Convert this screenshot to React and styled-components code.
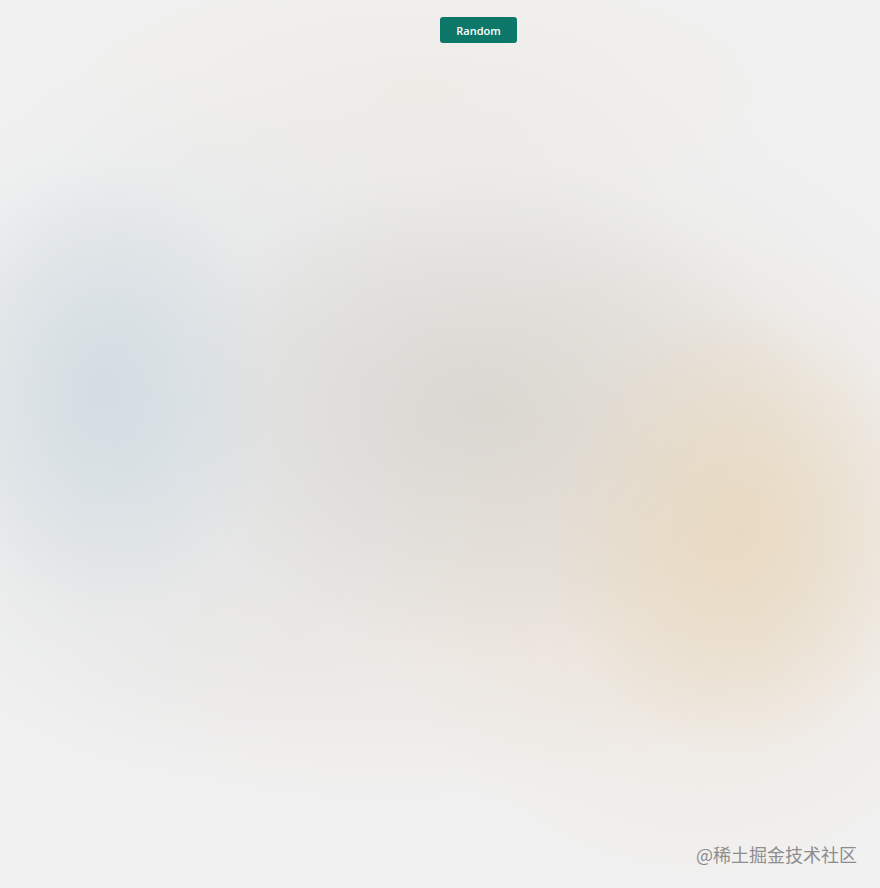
import React from "react";
import styled, { createGlobalStyle } from "styled-components";

const Global = createGlobalStyle`
  html, body { margin: 0; padding: 0; height: 100%; }
  body { background: #f1f1f1; font-family: "Segoe UI", "Open Sans", "Noto Sans", sans-serif; }
  #root { height: 100%; }
`;

const Stage = styled.div`
  position: relative;
  width: 880px;
  height: 888px;
  overflow: hidden;
  background:
    radial-gradient(ellipse 170px 230px at 105px 390px, rgba(205, 217, 224, 0.75), rgba(205, 217, 224, 0.35) 55%, rgba(205, 217, 224, 0) 100%),
    radial-gradient(ellipse 190px 230px at 740px 530px, rgba(232, 216, 190, 0.85), rgba(232, 216, 190, 0.4) 55%, rgba(232, 216, 190, 0) 100%),
    radial-gradient(ellipse 320px 250px at 490px 410px, rgba(216, 212, 206, 0.8), rgba(216, 212, 206, 0.35) 60%, rgba(216, 212, 206, 0) 100%),
    radial-gradient(ellipse 320px 330px at 700px 560px, rgba(236, 224, 208, 0.75), rgba(236, 224, 208, 0) 100%),
    radial-gradient(ellipse 360px 360px at 150px 420px, rgba(224, 229, 232, 0.8), rgba(224, 229, 232, 0) 100%),
    radial-gradient(ellipse 420px 200px at 380px 620px, rgba(236, 230, 224, 0.7), rgba(236, 230, 224, 0) 100%),
    radial-gradient(ellipse 560px 360px at 440px 420px, rgba(228, 226, 222, 0.9), rgba(228, 226, 222, 0) 100%),
    radial-gradient(ellipse 400px 140px at 420px 90px, rgba(238, 234, 228, 0.7), rgba(238, 234, 228, 0) 100%),
    #f1f1f1;
  display: flex;
  flex-direction: column;
  align-items: center;
`;

const Button = styled.button`
  margin-top: 17px;
  margin-left: 77px;
  width: 77px;
  height: 26px;
  border: none;
  border-radius: 3px;
  background: #0d7769;
  color: #ffffff;
  font-family: "Segoe UI", "Open Sans", "Noto Sans", sans-serif;
  font-size: 11px;
  font-weight: 600;
  cursor: pointer;
`;

const Watermark = styled.div`
  position: absolute;
  right: 23px;
  bottom: 21px;
  font-family: "Noto Sans CJK SC", sans-serif;
  font-size: 18px;
  color: #8d8d8d;
`;

export default function App() {
  return (
    <>
      <Global />
      <Stage>
        <Button>Random</Button>
        <Watermark>@稀土掘金技术社区</Watermark>
      </Stage>
    </>
  );
}
